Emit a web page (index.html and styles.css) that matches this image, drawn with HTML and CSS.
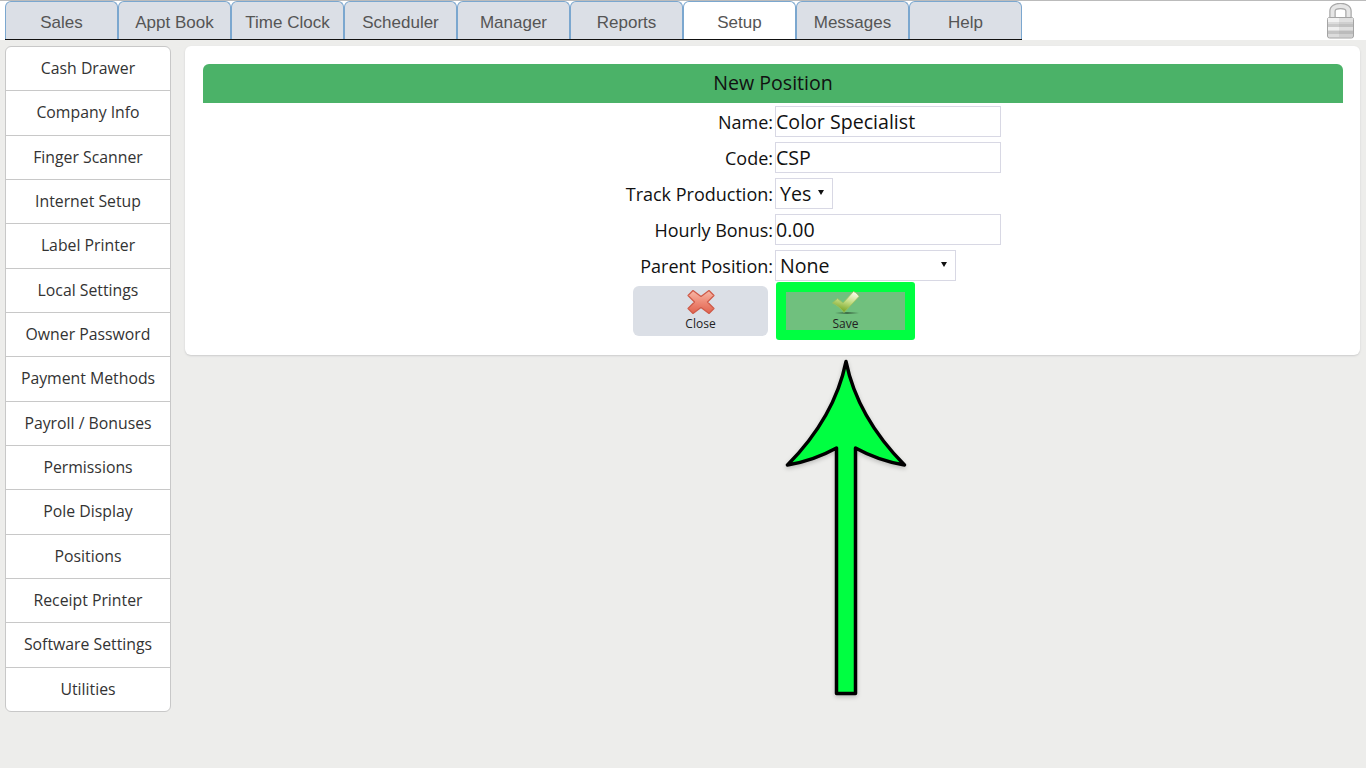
FILE: index.html
```html
<!DOCTYPE html>
<html>

<head>
    <meta charset="utf-8">
    <title>Setup - New Position</title>
    <link rel="stylesheet" href="styles.css">
</head>

<body>
    <div class="topbar">
        <div class="tabs">
            <a class="tab">Sales</a>
            <a class="tab">Appt Book</a>
            <a class="tab">Time Clock</a>
            <a class="tab">Scheduler</a>
            <a class="tab">Manager</a>
            <a class="tab">Reports</a>
            <a class="tab active">Setup</a>
            <a class="tab">Messages</a>
            <a class="tab">Help</a>
        </div>
        <svg class="lock" width="30" height="36" viewBox="0 0 30 36">
            <path d="M6.5 16V8c0-3 3-5 8-5s8 2 8 5v8" fill="none" stroke="#a8a8a8" stroke-width="6.5" />
            <path d="M6.5 16V8c0-3 3-5 8-5s8 2 8 5v8" fill="none" stroke="#e6e6e6" stroke-width="4" />
            <rect x="1.500" y="14.500" width="26" height="20.500" rx="2" fill="#dcdcdc" stroke="#a4a4a4" />
            <rect x="2" y="15" width="25" height="4" fill="#f2f2f2" />
            <rect x="2" y="21" width="25" height="3" fill="#cacaca" />
            <rect x="2" y="24" width="25" height="3" fill="#f0f0f0" />
            <rect x="2" y="28" width="25" height="3" fill="#c4c4c4" />
            <rect x="13" y="15" width="14" height="19" fill="#999" opacity="0.2" />
        </svg>
    </div>

    <div class="main">
        <div class="sidebar">
            <a class="side-item">Cash Drawer</a>
            <a class="side-item">Company Info</a>
            <a class="side-item">Finger Scanner</a>
            <a class="side-item">Internet Setup</a>
            <a class="side-item">Label Printer</a>
            <a class="side-item">Local Settings</a>
            <a class="side-item">Owner Password</a>
            <a class="side-item">Payment Methods</a>
            <a class="side-item">Payroll / Bonuses</a>
            <a class="side-item">Permissions</a>
            <a class="side-item">Pole Display</a>
            <a class="side-item">Positions</a>
            <a class="side-item">Receipt Printer</a>
            <a class="side-item">Software Settings</a>
            <a class="side-item">Utilities</a>
        </div>

        <div class="panel">
            <div class="panel-title">New Position</div>
            <div class="form">
                <label>Name:</label>
                <div class="field wide">Color Specialist</div>
                <label>Code:</label>
                <div class="field wide">CSP</div>
                <label>Track Production:</label>
                <div class="field select short">Yes<span class="caret"></span></div>
                <label>Hourly Bonus:</label>
                <div class="field wide">0.00</div>
                <label>Parent Position:</label>
                <div class="field select medium">None<span class="caret"></span></div>
            </div>
            <div class="buttons">
                <div class="btn-slot left">
                    <button class="btn close">
                        <svg width="28" height="26" viewBox="0 0 28 26">
                            <defs>
                                <linearGradient id="xfill" x1="0" y1="0" x2="0" y2="1">
                                    <stop offset="0" stop-color="#f7b9a8" />
                                    <stop offset="0.5" stop-color="#ee8a76" />
                                    <stop offset="1" stop-color="#e0634f" />
                                </linearGradient>
                            </defs>
                            <path d="M6 1.500l8 6 8-6 5 5-6.500 6.500 6.500 6.500-5 5-8-6-8 6-5-5 6.500-6.500-6.500-6.500z" fill="url(#xfill)" stroke="#cf5a48" stroke-width="1.200" stroke-linejoin="round" />
                        </svg>
                        <span>Close</span>
                    </button>
                </div>
                <div class="btn-slot">
                    <div class="highlight">
                        <button class="btn save">
                            <svg width="28" height="24" viewBox="0 0 28 24">
                                <defs>
                                    <linearGradient id="checkfill" x1="0.7" y1="0" x2="0.35" y2="1">
                                        <stop offset="0" stop-color="#f8fbec" />
                                        <stop offset="0.45" stop-color="#c6de86" />
                                        <stop offset="1" stop-color="#6f9f1c" />
                                    </linearGradient>
                                    <linearGradient id="checkshadow" x1="0" y1="0" x2="1" y2="0">
                                        <stop offset="0" stop-color="#3f6f48" stop-opacity="0" />
                                        <stop offset="0.5" stop-color="#3f6f48" />
                                        <stop offset="1" stop-color="#3f6f48" stop-opacity="0" />
                                    </linearGradient>
                                </defs>
                                <rect x="3" y="21" width="24" height="2" fill="url(#checkshadow)" />
                                <path d="M0.500 12l5-4.500 5.500 4.500L21.500 0.500c2.500 1 4.500 3 5.500 5L12 21.500c-3-4-7-7.500-11.500-9.500z" fill="url(#checkfill)" stroke="#9cc25e" stroke-width="0.800" stroke-linejoin="round" />
                            </svg>
                            <span>Save</span>
                        </button>
                    </div>
                </div>
            </div>
        </div>
    </div>

    <svg class="arrow" width="124" height="340" viewBox="0 0 124 340">
        <path d="M62 3.500C55 38 38 72 3.500 107C22 104 38 98 52.500 90V335.500H71.500V90C86 98 102 104 120.500 107C86 72 69 38 62 3.500Z" fill="#00ff41" stroke="#000" stroke-width="3.500" stroke-linejoin="round" />
    </svg>
</body>

</html>
```

FILE: styles.css
```css
html,
body {
    height: 100%;
}

body {
    margin: 0;
    background-color: #ededeb;
    font-family: 'Open Sans', sans-serif;
    color: #222;
    overflow: hidden;
    position: relative;
}

.topbar {
    display: flex;
    justify-content: space-between;
    height: 40px;
    padding-left: 5px;
    background-color: white;
    border-top: 1px solid #bbb;
    box-sizing: border-box;
}

.tabs {
    display: flex;
    border-bottom: 1px solid #111;
}

.tab {
    width: 113px;
    box-sizing: border-box;
    background-color: #dbdfe6;
    border: 1px solid #7ba7cf;
    border-bottom: none;
    border-radius: 6px 6px 0 0;
    font-family: 'Liberation Sans', sans-serif;
    font-size: 17px;
    line-height: 42px;
    text-align: center;
    color: #555;
}

.tab.active {
    background-color: white;
}

.lock {
    margin: 2px 10px 0 0;
}

.main {
    display: flex;
    align-items: flex-start;
    gap: 14px;
    padding: 6px 6px 0 5px;
}

.sidebar {
    display: flex;
    flex-direction: column;
    flex-shrink: 0;
    width: 166px;
    height: 666px;
    box-sizing: border-box;
    background-color: white;
    border: 1px solid #c8c8c8;
    border-radius: 6px;
}

.side-item {
    flex: 1;
    display: flex;
    align-items: center;
    justify-content: center;
    padding-bottom: 1px;
    font-size: 15.8px;
    color: #333;
    border-bottom: 1px solid #c8c8c8;
}

.side-item:last-child {
    border-bottom: none;
}

.panel {
    flex: 1;
    height: 309px;
    box-sizing: border-box;
    padding: 18px 17px 0 18px;
    background-color: white;
    border-radius: 6px;
    box-shadow: 0 1px 2px #ccc;
}

.panel-title {
    height: 39px;
    line-height: 38px;
    text-align: center;
    font-size: 19.6px;
    color: #111;
    background-color: #4bb268;
    border-radius: 6px 6px 0 0;
}

.form {
    display: grid;
    grid-template-columns: 570px 1fr;
    grid-auto-rows: 31px;
    row-gap: 5px;
    margin-top: 3px;
}

label {
    align-self: center;
    text-align: right;
    font-size: 18px;
    color: #111;
}

.field {
    margin-left: 2px;
    box-sizing: border-box;
    border: 1px solid #d8d8e4;
    font-size: 19.6px;
    line-height: 29px;
    color: #111;
}

.field.wide {
    width: 226px;
}

.select {
    position: relative;
    padding-left: 4px;
}

.field.short {
    width: 58px;
}

.field.medium {
    width: 181px;
}

.caret {
    position: absolute;
    right: 8px;
    top: 11px;
    border-left: 3px solid transparent;
    border-right: 3px solid transparent;
    border-top: 5px solid #111;
}

.buttons {
    display: grid;
    grid-template-columns: 570px 1fr;
    margin-top: 1px;
}

.btn-slot {
    margin-left: 3px;
}

.btn-slot.left {
    display: flex;
    justify-content: flex-end;
    align-items: center;
    margin: 0 5px 0 0;
}

.highlight {
    width: 139px;
    height: 58px;
    box-sizing: border-box;
    padding: 10px 9px 10px 10px;
    background-color: #00ff41;
    border-radius: 3px;
}

.btn {
    display: flex;
    flex-direction: column;
    align-items: center;
    border: none;
    padding: 3px 0 0;
    font-family: 'Open Sans', sans-serif;
    font-size: 12px;
    color: #222;
}

.btn span {
    line-height: 14px;
}

.close {
    width: 135px;
    height: 50px;
    background-color: #dbdfe6;
    border-radius: 6px;
}

.close span {
    margin-top: 2px;
}

.save {
    width: 119px;
    height: 38px;
    padding-top: 0;
    background-color: #70c07e;
}

.save svg {
    flex-shrink: 0;
    margin-top: -1px;
}

.save span {
    margin-top: 2px;
}

.arrow {
    position: absolute;
    left: 784px;
    top: 358px;
    filter: drop-shadow(0 2px 2px rgba(0, 0, 0, 0.2));
}
```
